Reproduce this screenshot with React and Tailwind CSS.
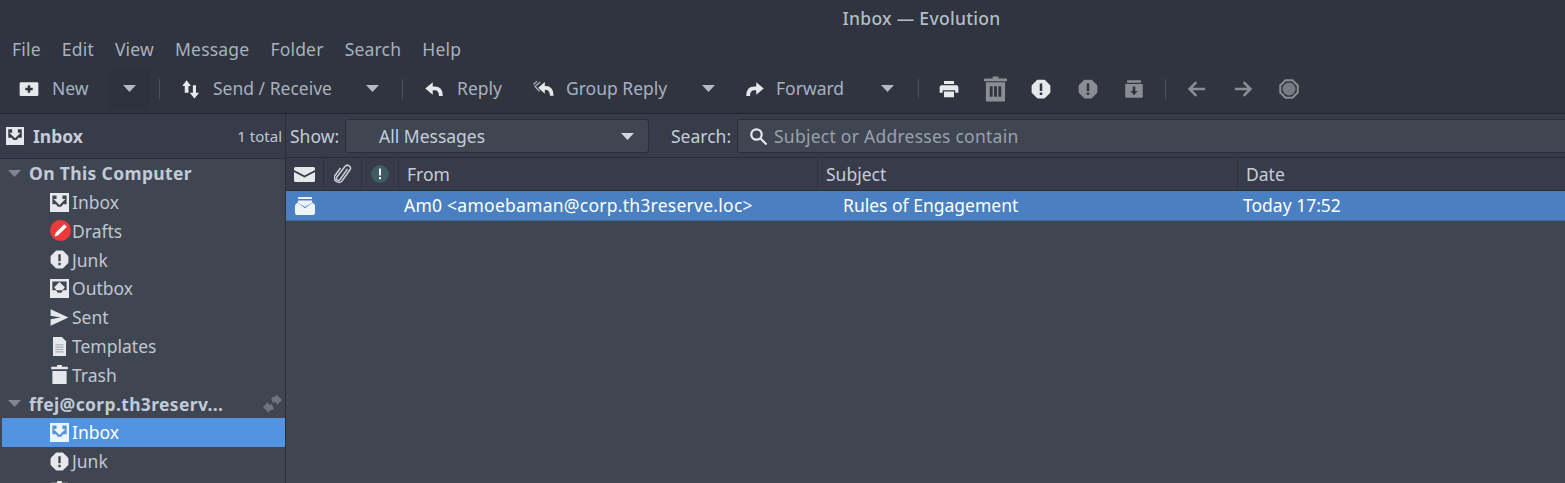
const font = "font-['Noto_Sans',sans-serif]";

const Caret = ({ className = "", fill = "#b4bac4" }) => (
  <svg width="13" height="7" viewBox="0 0 13 7" className={className}>
    <path d="M0 0h13L6.500 7z" fill={fill} />
  </svg>
);

const Icon = ({ size = 20, fill = "#e6e8ec", children, className = "" }) => (
  <svg width={size} height={size} viewBox="0 0 16 16" fill={fill} className={`shrink-0 ${className}`}>
    {children}
  </svg>
);

const NewIcon = () => (
  <Icon>
    <path fillRule="evenodd" d="M1.500 2.500h13a1 1 0 0 1 1 1v9a1 1 0 0 1-1 1h-13a1 1 0 0 1-1-1v-9a1 1 0 0 1 1-1zM7 5v2H5v2h2v2h2V9h2V7H9V5z" />
  </Icon>
);
const SendIcon = () => (
  <Icon>
    <path d="M4.500 1 8 5.500H6v5.500H3V5.500H1zM9.500 5H12v6h2.500l-3.750 4.500L7 11h2.500z" />
  </Icon>
);
const ReplyIcon = () => (
  <Icon>
    <path d="M7 2.500 1 7.500l6 5z" />
    <path d="M6 7.500h2.500c3.500 0 5 2 5 6" fill="none" stroke="#e6e8ec" strokeWidth="3" />
  </Icon>
);
const GroupReplyIcon = () => (
  <Icon size={21}>
    <path d="M9 3 4 7.500l5 4.500z" />
    <path d="M8 7.500h1.500c3.500 0 4.800 2 4.800 6" fill="none" stroke="#e6e8ec" strokeWidth="2.800" />
    <path d="M5.500 3 1.500 6.500 5 10M3 2.500.300 5" fill="none" stroke="#a2a8b3" strokeWidth="1.100" />
  </Icon>
);
const ForwardIcon = () => (
  <Icon>
    <path d="M9 2.500l6 5-6 5z" />
    <path d="M10 7.500H7.500c-3.500 0-5 2-5 6" fill="none" stroke="#e6e8ec" strokeWidth="3" />
  </Icon>
);
const PrintIcon = () => (
  <Icon>
    <path d="M4 1.500h8V4H4zM2 5h12a1.500 1.500 0 0 1 1.500 1.500V11H13V9H3v2H.500V6.500A1.500 1.500 0 0 1 2 5zM4 10h8v4.500H4z" />
  </Icon>
);
const TrashIcon = () => (
  <svg width="23" height="26" viewBox="0 0 24 26" className="shrink-0">
    <path fill="#8a8d93" d="M9 0h6v2h8a1 1 0 0 1 1 1v2H0V3a1 1 0 0 1 1-1h8z" />
    <path fillRule="evenodd" fill="#8a8d93" d="M2 6h20v19a1 1 0 0 1-1 1H3a1 1 0 0 1-1-1zM6 10v11h3V10zM10.500 10v11h3V10zM15 10v11h3V10z" />
  </svg>
);
const ExclaimIcon = ({ fill = "#e6e8ec", size = 20, bang = "#2f343f" }) => (
  <Icon fill={fill} size={size}>
    <path d="M5.500.500h5a1 1 0 0 1 .700.300l4 4a1 1 0 0 1 .300.700v5a1 1 0 0 1-.300.700l-4 4a1 1 0 0 1-.700.300h-5a1 1 0 0 1-.700-.300l-4-4a1 1 0 0 1-.300-.700v-5a1 1 0 0 1 .300-.700l4-4a1 1 0 0 1 .700-.300z" />
    <path fill={bang} d="M7 3.500h2v6H7zM7 10.750h2v2H7z" />
  </Icon>
);
const ArchiveIcon = () => (
  <Icon fill="#8a8d93">
    <path fillRule="evenodd" d="M2.500 1h11v2h-11zM1 4h14v10a1 1 0 0 1-1 1H2a1 1 0 0 1-1-1zM7 6v3.500H5L8 13l3-3.500H9V6z" />
  </Icon>
);
const BackIcon = () => (
  <Icon fill="none">
    <path d="M14.500 8H2M7.500 2.500 2 8l5.500 5.500" stroke="#8a8d93" strokeWidth="2" />
  </Icon>
);
const NextIcon = () => (
  <Icon fill="none">
    <path d="M1.500 8H14M8.500 2.500 14 8l-5.500 5.500" stroke="#8a8d93" strokeWidth="2" />
  </Icon>
);
const StopIcon = () => (
  <Icon fill="none">
    <path d="M5.200 1h5.600L15 5.200v5.600L10.800 15H5.200L1 10.800V5.200z" stroke="#8a8d93" strokeWidth="1.600" />
    <circle cx="8" cy="8" r="5.200" fill="#777b84" />
  </Icon>
);

const InboxIcon = ({ fill = "#e6e8ec", hole = "#404552", size = 19 }) => (
  <Icon size={size} fill={fill}>
    <path d="M0 0h16v16H0z" />
    <path fill={hole} d="M2 2h12v7.500h-3l-1.500 2h-3L5 9.500H2z" />
    <path d="M5.500 1h5v4H13L8 10 3 5h2.500z" />
  </Icon>
);
const DraftIcon = () => (
  <Icon size={21}>
    <circle cx="8" cy="8" r="8" fill="#ee3a3a" />
    <path fill="#fff" d="M10.800 3.200 12.800 5.200 6.300 11.700 3.500 12.500 4.300 9.700z" />
  </Icon>
);
const JunkIcon = () => <ExclaimIcon bang="#404552" size={19} />;
const OutboxIcon = () => (
  <Icon size={19}>
    <path d="M0 0h16v16H0z" />
    <path fill="#404552" d="M2 2h12v7.500h-3l-1.500 2h-3L5 9.500H2z" />
    <path d="M8 2.500 12.500 7 10.500 9.500h-5L3.500 7z" />
  </Icon>
);
const SentIcon = () => (
  <Icon size={19}>
    <path d="M.500 1 15.500 8 .500 15V9.500L9 8 .500 6.500z" />
  </Icon>
);
const TemplateIcon = () => (
  <Icon size={19}>
    <path d="M2.500 0H10l3.500 3.500V16h-11z" />
    <path fill="#a8abb2" d="M4.500 6h7v1h-7zM4.500 8h7v1h-7zM4.500 10h7v1h-7zM4.500 12h7v1h-7z" />
  </Icon>
);
const TrashFolderIcon = () => (
  <Icon size={19}>
    <path d="M6 0h4v1.500h5V3.500H1V1.500h5zM2 5h12v11H2z" />
  </Icon>
);
const SyncIcon = () => (
  <svg width="19" height="19" viewBox="0 0 19 19" fill="#6f737b" className="shrink-0">
    <path d="M13 0 19 6 14 11 13 8 10 9 8 4 13 2zM6 19 0 13 5 8 6 11 9 10 11 15 6 17z" />
  </svg>
);

const Sep = ({ className = "" }) => <div className={`h-[20px] w-px shrink-0 bg-[#4a4f5c] ${className}`} />;

function ToolButton({ icon, label, width, slot = "w-[33px]" }) {
  return (
    <div className={`flex h-full shrink-0 items-center pl-[11px] ${width}`}>
      <div className={`flex shrink-0 items-center ${slot}`}>{icon}</div>
      <span>{label}</span>
    </div>
  );
}

function IconSlot({ children, width = "w-[46px]" }) {
  return <div className={`flex h-full shrink-0 items-center justify-center ${width}`}>{children}</div>;
}

function Toolbar() {
  return (
    <div className="flex h-[52px] shrink-0 items-center border-b border-[#23262e] pb-[2px] pl-[8px] pt-[4px] text-[17.500px] text-[#a7b1c0]">
      <ToolButton icon={<NewIcon />} label="New" width="w-[100px]" />
      <div className="flex h-[42px] w-[42px] shrink-0 items-center justify-center rounded-sm bg-[#2d323c]">
        <Caret />
      </div>
      <Sep className="ml-[9px]" />
      <div className="w-[10px] shrink-0" />
      <ToolButton icon={<SendIcon />} label="Send / Receive" width="w-[196px]" slot="w-[32px]" />
      <Caret className="shrink-0" />
      <div className="w-[23px] shrink-0" />
      <Sep />
      <div className="w-[10px] shrink-0" />
      <ToolButton icon={<ReplyIcon />} label="Reply" width="w-[109px]" />
      <ToolButton icon={<GroupReplyIcon />} label="Group Reply" width="w-[180px]" />
      <Caret className="shrink-0" />
      <div className="w-[19px] shrink-0" />
      <ToolButton icon={<ForwardIcon />} label="Forward" width="w-[147px]" slot="w-[31px]" />
      <Caret className="shrink-0" />
      <div className="w-[24px] shrink-0" />
      <Sep />
      <div className="w-[7px] shrink-0" />
      <IconSlot><PrintIcon /></IconSlot>
      <IconSlot><TrashIcon /></IconSlot>
      <IconSlot><ExclaimIcon /></IconSlot>
      <IconSlot width="w-[47px]"><ExclaimIcon fill="#8a8d93" /></IconSlot>
      <IconSlot><ArchiveIcon /></IconSlot>
      <div className="w-[8px] shrink-0" />
      <Sep />
      <div className="w-[8px] shrink-0" />
      <IconSlot><BackIcon /></IconSlot>
      <IconSlot><NextIcon /></IconSlot>
      <IconSlot><StopIcon /></IconSlot>
    </div>
  );
}

function FolderRow({ icon, label, selected }) {
  return (
    <div className={`flex h-[28.800px] shrink-0 items-center pl-[48px] ${selected ? "bg-[#5294e2] text-white" : "text-[#bfc7d3]"}`}>
      <div className="flex w-[22px] shrink-0 items-center">{icon}</div>
      <span>{label}</span>
    </div>
  );
}

function GroupRow({ label, right }) {
  return (
    <div className="flex h-[28.800px] shrink-0 items-center pl-[6px] pr-[3px] font-bold tracking-[0.350px] text-[#c0cad8]">
      <Caret className="mr-[8px] shrink-0" fill="#80858f" />
      <span>{label}</span>
      {right && <div className="ml-auto">{right}</div>}
    </div>
  );
}

function Sidebar() {
  return (
    <div className="flex w-[286px] shrink-0 flex-col border-r border-[#2a2e37] bg-[#404552] text-[17.500px]">
      <div className="flex h-[45px] shrink-0 items-center border-b border-[#2a2e37] bg-[#383c4a] pl-[6px] pr-[3px]">
        <InboxIcon size={18} hole="#383c4a" />
        <span className="ml-[9px] font-bold text-[#c5cdd8]">Inbox</span>
        <span className="ml-auto text-[15px] text-[#bfc7d3]">1 total</span>
      </div>
      <div className="flex flex-col pl-[2px]">
        <GroupRow label="On This Computer" />
        <FolderRow icon={<InboxIcon />} label="Inbox" />
        <FolderRow icon={<DraftIcon />} label="Drafts" />
        <FolderRow icon={<JunkIcon />} label="Junk" />
        <FolderRow icon={<OutboxIcon />} label="Outbox" />
        <FolderRow icon={<SentIcon />} label="Sent" />
        <FolderRow icon={<TemplateIcon />} label="Templates" />
        <FolderRow icon={<TrashFolderIcon />} label="Trash" />
        <GroupRow label="ffej@corp.th3reserv..." right={<SyncIcon />} />
        <FolderRow icon={<InboxIcon fill="#eef4fc" hole="#5294e2" />} label="Inbox" selected />
        <FolderRow icon={<JunkIcon />} label="Junk" />
        <FolderRow icon={<TrashFolderIcon />} label="Trash" />
      </div>
    </div>
  );
}

function HeaderCell({ width, children, className = "" }) {
  return (
    <div className={`flex h-full shrink-0 items-center border-r border-[#2f333d] ${width} ${className}`}>{children}</div>
  );
}

function MessageList() {
  return (
    <div className="flex min-w-0 flex-1 flex-col bg-[#404552]">
      <div className="flex h-[44px] shrink-0 items-center border-b border-[#2a2e37] bg-[#383c4a] pl-[4px] pt-[1px] text-[#c5cdd8]">
        <span className="w-[55px] shrink-0">Show:</span>
        <div className="flex h-[34px] w-[304px] shrink-0 items-center justify-between rounded-[3px] border border-[#2b2e39] bg-[#404552] pl-[33px] pr-[14px]">
          <span>All Messages</span>
          <Caret fill="#d3d7de" />
        </div>
        <span className="ml-[22px] w-[66px] shrink-0">Search:</span>
        <div className="flex h-[34px] flex-1 items-center rounded-l-[3px] border border-r-0 border-[#2b2e39] bg-[#404552] pl-[11px] text-[#9aa1ad]">
          <svg width="19" height="19" viewBox="0 0 19 19" fill="none" stroke="#e6e8ec" strokeWidth="2.200" className="mr-[6px] shrink-0">
            <circle cx="7.500" cy="7.500" r="5.200" />
            <path d="m11.500 11.500 6 6" />
          </svg>
          <span className="tracking-[0.250px]">Subject or Addresses contain</span>
        </div>
      </div>
      <div className="flex h-[33px] shrink-0 items-center border-b border-[#2a2e37] bg-[#383c4a] text-[#c5cdd8]">
        <HeaderCell width="w-[38px]" className="justify-center">
          <svg width="21" height="15" viewBox="0 0 21 15" fill="#e6e8ec">
            <path d="M1.500 0h18A1.500 1.500 0 0 1 21 1.500V3l-10.500 5.500L0 3V1.500A1.500 1.500 0 0 1 1.500 0zM0 5l10.500 5.500L21 5v8.500a1.500 1.500 0 0 1-1.500 1.500h-18A1.500 1.500 0 0 1 0 13.500z" />
          </svg>
        </HeaderCell>
        <HeaderCell width="w-[38px]" className="justify-center">
          <svg width="18" height="20" viewBox="0 0 18 20" fill="none" stroke="#c9cdd4" strokeWidth="1.500">
            <path d="M13.500 5 6 15.500a2 2 0 0 1-3.300-2.300L11 2.500a3 3 0 0 1 5 3.300L8 17a4.500 4.500 0 0 1-7-5.500L6.500 4" />
          </svg>
        </HeaderCell>
        <HeaderCell width="w-[37px]" className="justify-center">
          <svg width="18" height="18" viewBox="0 0 18 18">
            <circle cx="9" cy="9" r="9" fill="#3f5a63" />
            <path d="M8 3.500h2v7H8zM8 12h2v2.200H8z" fill="#eef0f2" />
          </svg>
        </HeaderCell>
        <HeaderCell width="w-[419px]" className="pl-[8px]">From</HeaderCell>
        <HeaderCell width="w-[420px]" className="pl-[8px]">Subject</HeaderCell>
        <div className="flex h-full flex-1 items-center pl-[8px]">Date</div>
      </div>
      <div className="flex h-[30px] shrink-0 items-center border-b border-[#3a6ea8] bg-[#4a7fc1] text-white">
        <div className="flex w-[115px] shrink-0 items-center pl-[9px]">
          <svg width="20" height="18" viewBox="0 0 20 18" fill="#eef4fc">
            <path d="M4 0h12a1 1 0 0 1 1 1v1H3V1a1 1 0 0 1 1-1z" />
            <path d="M3 3.500h14v2.200l-7 4.300-7-4.300z" />
            <path d="M0 8l2.500-2.500L10 11.200l7.500-5.700L20 8v8a2 2 0 0 1-2 2H2a2 2 0 0 1-2-2z" />
          </svg>
        </div>
        <span className="w-[442px] shrink-0 pl-[3px] tracking-[0.250px]">Am0 &lt;amoebaman@corp.th3reserve.loc&gt;</span>
        <span className="w-[400px] shrink-0">Rules of Engagement</span>
        <span>Today 17:52</span>
      </div>
    </div>
  );
}

export default function App() {
  return (
    <div className={`flex h-[483px] w-[1565px] flex-col overflow-hidden bg-[#2f343f] text-[17.500px] ${font}`}>
      <div className="flex h-[36px] shrink-0 items-center justify-center pl-[278px] font-medium tracking-[0.300px] text-[#b4bdca]">
        Inbox — Evolution
      </div>
      <div className="flex h-[26px] shrink-0 items-center gap-[21px] pl-[12px] tracking-[0.200px] text-[#a7b1c0]">
        <span>File</span>
        <span>Edit</span>
        <span>View</span>
        <span>Message</span>
        <span>Folder</span>
        <span>Search</span>
        <span>Help</span>
      </div>
      <Toolbar />
      <div className="flex min-h-0 flex-1">
        <Sidebar />
        <MessageList />
      </div>
    </div>
  );
}
